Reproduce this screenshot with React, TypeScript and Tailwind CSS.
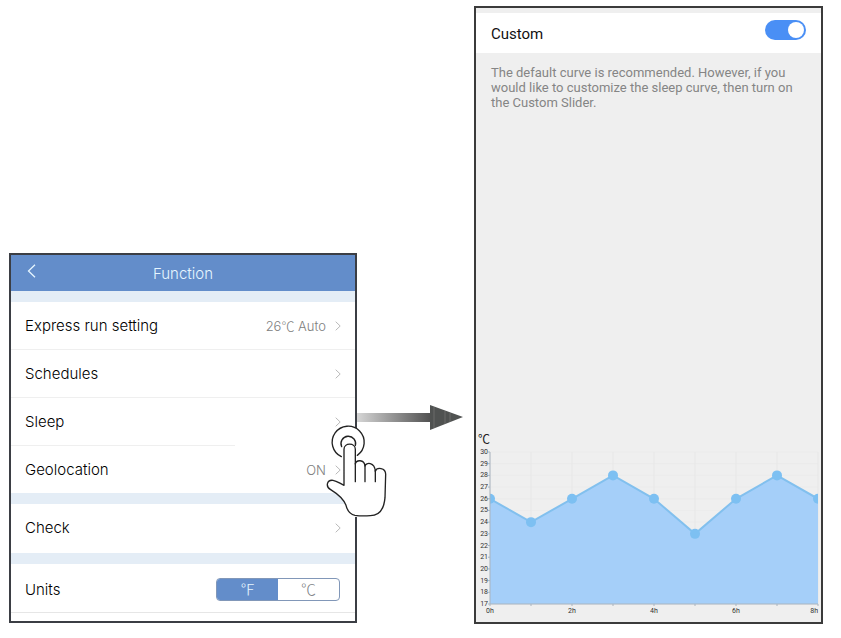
import { useState } from "react";
import type { ReactNode } from "react";

const curve = [26, 24, 26, 28, 26, 23, 26, 28, 26];
const MIN_TEMP = 17;
const MAX_TEMP = 30;

// Plot area inside the 345 x 192 chart
const LEFT = 14;
const RIGHT = 342;
const TOP = 22;
const BOTTOM = 174;

const hourX = (hour: number) => LEFT + (hour * (RIGHT - LEFT)) / 8;
const tempY = (temp: number) =>
  BOTTOM - ((temp - MIN_TEMP) * (BOTTOM - TOP)) / (MAX_TEMP - MIN_TEMP);

function Chevron() {
  return (
    <svg width="6" height="10" viewBox="0 0 6 10" fill="none" stroke="#b9b9b9" aria-hidden="true">
      <path d="M0.7 0.7L5.2 5L0.7 9.3" />
    </svg>
  );
}

function Degree({ children }: { children: string }) {
  return <span className="font-['Noto_Sans_CJK_SC',sans-serif] font-light">{children}</span>;
}

type RowProps = {
  label: string;
  value?: ReactNode;
};

function Row({ label, value }: RowProps) {
  return (
    <button type="button" className="flex h-[47px] w-full items-center pr-[14px] pl-[14px] text-left">
      <span className="flex-1">{label}</span>
      {value && <span className="mr-[9px] text-[13px] text-[#808080]">{value}</span>}
      <Chevron />
    </button>
  );
}

function Band() {
  return <div className="h-[11px] bg-[#e4edf6]" />;
}

function TapHand() {
  return (
    <svg
      className="pointer-events-none absolute top-[160px] -right-[45px] z-10"
      width="80"
      height="110"
      viewBox="0 0 240 330"
      fill="#fff"
      stroke="#222"
      strokeWidth="4"
      strokeLinecap="round"
      strokeLinejoin="round"
      aria-hidden="true"
    >
      <circle cx="85" cy="82" r="48" stroke="none" />
      <rect x="73" y="110" width="42" height="196" stroke="none" />
      <path d="M64 125A48 48 0 1 1 112 121" />
      <path d="M65 95A22 22 0 1 1 106 92" />
      <path d="M72 211V103C72 82 106 82 106 103V147C108 134 133 132 135 153C138 141 164 141 166 169C170 156 197 157 197 178L195 248C192 282 177 302 151 302C134 303 119 303 105 301C89 298 82 287 78 271C70 250 55 238 32 224C16 215 20 194 39 196C52 198 60 206 72 211Z" />
      <path d="M106 145V200M135 151V200M166 166V200" fill="none" />
    </svg>
  );
}

function FunctionScreen() {
  const [unit, setUnit] = useState("F");

  return (
    <section className="relative mb-px min-w-0 flex-[348] border-2 border-[#3b3e44] bg-white font-['Inter',sans-serif] text-[15px] leading-5 font-light text-black">
      <header className="grid h-9 grid-cols-[40px_1fr_40px] items-center bg-[#638dca] text-[#e6f6ff]">
        <button type="button" aria-label="Back" className="pb-1 pl-4">
          <svg width="9" height="14" viewBox="0 0 9 14" fill="none" stroke="currentColor" strokeWidth="1.3">
            <path d="M8 0.7L1.5 7L8 13.3" />
          </svg>
        </button>
        <h1 className="pt-0.5 text-center font-light">Function</h1>
      </header>
      <Band />
      <Row label="Express run setting" value={<>26<Degree>℃</Degree> Auto</>} />
      <div className="h-px bg-[#efefef]" />
      <Row label="Schedules" />
      <div className="h-px bg-[#efefef]" />
      <Row label="Sleep" />
      <div className="h-px w-[65%] bg-[#efefef]" />
      <Row label="Geolocation" value="ON" />
      <Band />
      <div className="pb-0.5">
        <Row label="Check" />
      </div>
      <Band />
      <div className="flex h-[49px] items-center justify-between border-b border-[#e6e6e6] pt-0.5 pr-[15px] pl-[14px]">
        <span className="pt-0.5">Units</span>
        <div className="flex h-[23px] w-[124px] overflow-hidden rounded-[4px] border border-[#8197b8]">
          <button
            type="button"
            aria-pressed={unit === "F"}
            onClick={() => setUnit("F")}
            className="flex flex-1 items-center justify-center text-[#808388] aria-pressed:bg-[#638dca] aria-pressed:text-[#e6f6ff]"
          >
            <Degree>℉</Degree>
          </button>
          <button
            type="button"
            aria-pressed={unit === "C"}
            onClick={() => setUnit("C")}
            className="flex flex-1 items-center justify-center text-[#808388] aria-pressed:bg-[#638dca] aria-pressed:text-[#e6f6ff]"
          >
            <Degree>℃</Degree>
          </button>
        </div>
      </div>
      <div className="h-2" />
      <TapHand />
    </section>
  );
}

function Arrow() {
  return (
    <svg className="mb-[194px] shrink-0" width="117" height="25" viewBox="0 0 117 25" aria-hidden="true">
      <defs>
        <linearGradient id="shaft">
          <stop offset="0" stopColor="#d6d6d6" />
          <stop offset="0.5" stopColor="#929292" />
          <stop offset="1" stopColor="#505050" />
        </linearGradient>
      </defs>
      <path d="M0 8H74V17H0Z" fill="url(#shaft)" />
      <path d="M73 0L106 12L73 25Z" fill="#505251" />
      <path d="M77 2V23M88 6V19M93 8V17" stroke="#777" strokeWidth="0.7" />
    </svg>
  );
}

function SleepChart() {
  const line = curve.map((temp, hour) => `${hourX(hour)},${tempY(temp)}`).join(" ");
  const temps = Array.from({ length: MAX_TEMP - MIN_TEMP + 1 }, (_, i) => MIN_TEMP + i);

  return (
    <svg className="block w-full" viewBox="0 0 345 192" role="img" aria-label="Sleep curve">
      <defs>
        <clipPath id="plot">
          <rect x={LEFT} y="0" width={RIGHT - LEFT} height={BOTTOM} />
        </clipPath>
      </defs>
      <text x="2" y="14" fontSize="12" fill="#222" className="font-['Noto_Sans_CJK_SC',sans-serif]">
        ℃
      </text>
      <g stroke="#e7e7e7">
        {temps.map((temp) => (
          <line key={temp} x1={LEFT} x2={RIGHT} y1={tempY(temp)} y2={tempY(temp)} strokeWidth="0.5" />
        ))}
        {curve.map((_, hour) => (
          <line key={hour} x1={hourX(hour)} x2={hourX(hour)} y1={TOP} y2={BOTTOM} />
        ))}
      </g>
      <g clipPath="url(#plot)">
        <polygon points={`${LEFT},${BOTTOM} ${line} ${RIGHT},${BOTTOM}`} fill="#a5cff9" />
        <polyline points={line} fill="none" stroke="#82c0ee" strokeWidth="2" />
        {curve.map((temp, hour) => (
          <circle key={hour} cx={hourX(hour)} cy={tempY(temp)} r="5" fill="#7dc0f2" />
        ))}
      </g>
      <g stroke="#a9b4bf" strokeWidth="1">
        <path d={`M${LEFT} ${TOP}V${BOTTOM}H${RIGHT}`} fill="none" />
        {temps.map((temp) => (
          <line key={temp} x1={LEFT - 2} x2={LEFT} y1={tempY(temp)} y2={tempY(temp)} />
        ))}
        {curve.map((_, hour) => (
          <line key={hour} x1={hourX(hour)} x2={hourX(hour)} y1={BOTTOM} y2={BOTTOM + 2} />
        ))}
      </g>
      <g fontSize="7" fill="#333">
        {temps.map((temp) => (
          <text key={temp} x="12" y={tempY(temp) + 2} textAnchor="end">
            {temp}
          </text>
        ))}
        {[0, 2, 4, 6, 8].map((hour) => (
          <text key={hour} x={hour === 8 ? RIGHT : hourX(hour)} y="183" textAnchor={hour === 8 ? "end" : "middle"}>
            {hour}h
          </text>
        ))}
      </g>
    </svg>
  );
}

function SleepScreen() {
  const [custom, setCustom] = useState(true);

  return (
    <section className="min-w-0 flex-[349] border-2 border-[#3b3b3b] bg-[#efefef] pt-[5px] font-['Roboto','Noto_Sans_CJK_SC',sans-serif]">
      <div className="flex h-10 items-start justify-between bg-white pr-[15px] pl-[15px]">
        <label htmlFor="custom" className="pt-[11px] text-[15px] leading-5 text-[#111]">
          Custom
        </label>
        <input
          id="custom"
          type="checkbox"
          role="switch"
          checked={custom}
          onChange={(e) => setCustom(e.target.checked)}
          className="mt-[7px] h-5 w-[41px] appearance-none rounded-full bg-[#c4c4c4] before:mt-0.5 before:ml-0.5 before:block before:size-4 before:rounded-full before:bg-white checked:bg-[#4a8ff5] checked:before:ml-[23px]"
        />
      </div>
      <p className="px-[15px] pt-3 text-[13px] leading-[15px] text-[#858585]">
        The default curve is recommended. However, if you would like to customize the sleep curve, then turn on the
        Custom Slider.
      </p>
      <div className="mt-80">
        <SleepChart />
      </div>
    </section>
  );
}

export default function App() {
  return (
    <main className="flex min-h-screen items-start bg-white pt-[6px] pr-[18px] pl-[9px]">
      <div className="flex min-w-0 flex-1 items-end">
        <FunctionScreen />
        <Arrow />
        <SleepScreen />
      </div>
    </main>
  );
}
